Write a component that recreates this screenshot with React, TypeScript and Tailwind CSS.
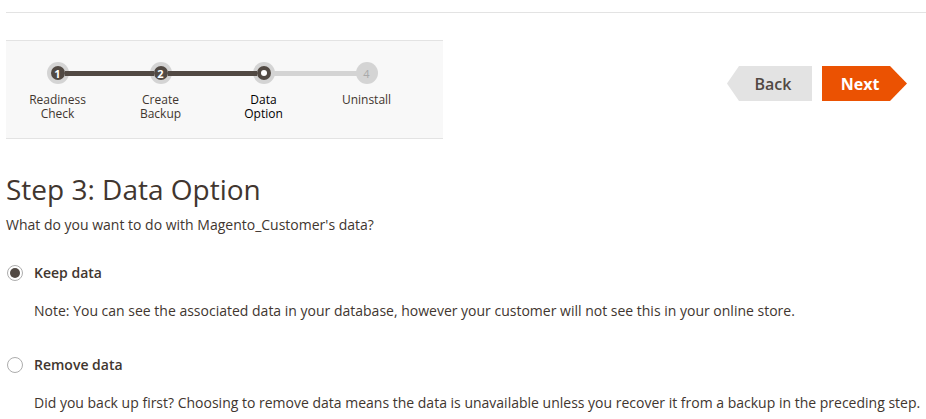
import React from "react";

type Step = { label: string[]; state: "done" | "active" | "todo"; num: number };

const steps: Step[] = [
  { label: ["Readiness", "Check"], state: "done", num: 1 },
  { label: ["Create", "Backup"], state: "done", num: 2 },
  { label: ["Data", "Option"], state: "active", num: 3 },
  { label: ["Uninstall"], state: "todo", num: 4 },
];

function StepNode({ step, index }: { step: Step; index: number }) {
  const first = index === 0;
  const last = index === steps.length - 1;
  const leftDark = step.state !== "todo";
  const rightDark = !last && steps[index + 1].state !== "todo";
  return (
    <li className="flex w-[103px] flex-col items-stretch">
      <div className="flex h-[22px] items-center">
        <div
          className={`relative z-[1] -mr-[4px] h-[5px] flex-1 ${
            first ? "bg-transparent" : leftDark ? "bg-[#514943]" : "bg-[#d4d4d4]"
          }`}
        />
        <div className="flex h-[22px] w-[22px] items-center justify-center rounded-full bg-[#d4d4d4]">
          {step.state === "done" && (
            <div className="relative z-[2] flex h-[14px] w-[14px] items-center justify-center rounded-full bg-[#514943] text-[11px] font-bold leading-none text-white">
              {step.num}
            </div>
          )}
          {step.state === "active" && (
            <div className="relative z-[2] flex h-[14px] w-[14px] items-center justify-center rounded-full bg-[#514943]">
              <div className="h-[6px] w-[6px] rounded-full bg-white" />
            </div>
          )}
          {step.state === "todo" && (
            <div className="relative z-[2] text-[11px] leading-none text-[#a9a9a9]">{step.num}</div>
          )}
        </div>
        <div
          className={`relative z-[1] -ml-[4px] h-[5px] flex-1 ${
            last ? "bg-transparent" : rightDark ? "bg-[#514943]" : "bg-[#d4d4d4]"
          }`}
        />
      </div>
      <div
        className={`mt-[9px] text-center text-[12px] leading-[14px] ${
          step.state === "active" ? "text-[#000000]" : "text-[#41362f]"
        }`}
      >
        {step.label.map((l) => (
          <div key={l}>{l}</div>
        ))}
      </div>
    </li>
  );
}

function Radio({ checked }: { checked: boolean }) {
  return (
    <span className="flex h-[16px] w-[16px] items-center justify-center rounded-full border border-[#adadad] bg-white">
      {checked && <span className="h-[10px] w-[10px] rounded-full bg-[#514943]" />}
    </span>
  );
}

export default function App() {
  return (
    <div
      className="min-h-[419px] w-[926px] overflow-hidden bg-white text-[#41362f]"
      style={{ fontFamily: '"Open Sans", "Noto Sans", sans-serif' }}
    >
      <div className="ml-[6px] pt-[12px]">
        <div className="border-t border-[#e3e3e3]" />
      </div>

      <div className="flex items-start pl-[6px] pt-[27px]">
        <nav className="h-[99px] w-[437px] border-y border-[#e3e3e3] bg-[#f8f8f8] pt-[21px]">
          <ol className="flex">
            {steps.map((s, i) => (
              <StepNode key={s.num} step={s} index={i} />
            ))}
          </ol>
        </nav>

        <div className="ml-auto mr-[19px] mt-[26px] flex gap-[10px]">
          <button className="flex h-[35px] w-[85px] items-center justify-center bg-[#e3e3e3] pl-[7px] text-[16px] font-semibold text-[#514943] [clip-path:polygon(12px_0,100%_0,100%_100%,12px_100%,0_50%)]">
            Back
          </button>
          <button className="flex h-[35px] w-[85px] items-center justify-center bg-[#eb5202] pr-[9px] text-[16px] font-bold text-white [clip-path:polygon(0_0,calc(100%-17px)_0,100%_50%,calc(100%-17px)_100%,0_100%)]">
            Next
          </button>
        </div>
      </div>

      <div className="px-[6px]">
        <h1 className="mt-[33px] text-[28px] font-normal leading-[34px] text-[#41362f]">Step 3: Data Option</h1>
        <p className="mt-[9px] text-[14px] leading-[20px]">What do you want to do with Magento_Customer's data?</p>

        <label className="mt-[30px] flex h-[16px] items-center">
          <span className="ml-[1px]">
            <Radio checked />
          </span>
          <span className="ml-[11px] text-[14px] font-semibold leading-[16px] text-[#41362f]">Keep data</span>
        </label>
        <p className="ml-[28px] mt-[20px] text-[14px] leading-[20px]">
          Note: You can see the associated data in your database, however your customer will not see this in your online store.
        </p>

        <label className="mt-[36px] flex h-[16px] items-center">
          <span className="ml-[1px]">
            <Radio checked={false} />
          </span>
          <span className="ml-[11px] text-[14px] font-semibold leading-[16px] text-[#41362f]">Remove data</span>
        </label>
        <p className="-mr-[6px] ml-[28px] mt-[20px] whitespace-nowrap text-[14px] leading-[20px]">
          Did you back up first? Choosing to remove data means the data is unavailable unless you recover it from a backup in the preceding step.
        </p>
      </div>
    </div>
  );
}
